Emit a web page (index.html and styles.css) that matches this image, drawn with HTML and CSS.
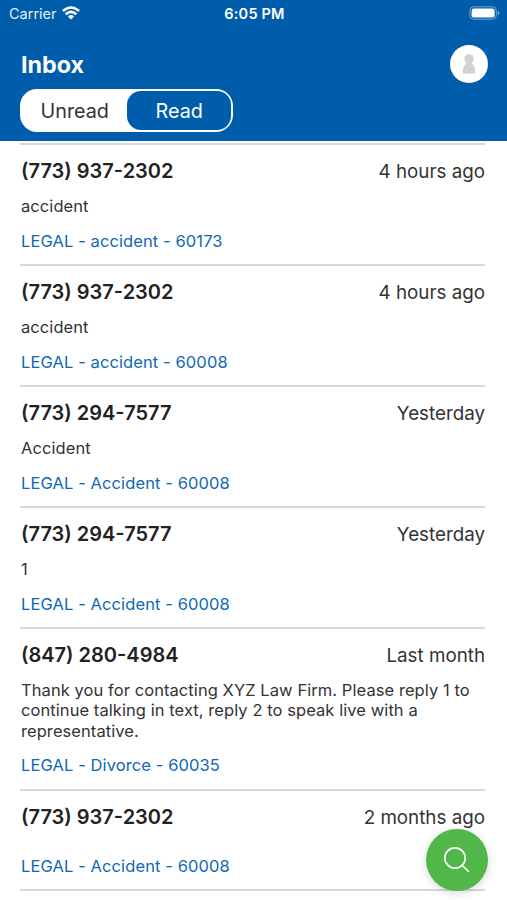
FILE: index.html
```html
<!DOCTYPE html>
<html lang="en">
<head>
    <meta charset="UTF-8">
    <meta name="viewport" content="width=device-width, initial-scale=1.0">
    <title>Inbox</title>
    <link rel="stylesheet" href="styles.css">
</head>
<body>
    <header class="header">
        <div class="status-bar">
            <div class="carrier">
                <span>Carrier</span>
                <svg class="wifi" width="18" height="14" viewBox="0 0 18 14" fill="none" stroke="#fff" stroke-width="2.5">
                    <path d="M0.9 5 Q9 -2 17.1 5"/>
                    <path d="M3.7 8.2 Q9 3.6 14.3 8.2"/>
                    <path d="M9 13.6 L5.9 10.4 Q9 7.8 12.1 10.4 Z" fill="#fff" stroke="none"/>
                </svg>
            </div>
            <span class="time">6:05 PM</span>
            <svg class="battery" width="31" height="14" viewBox="0 0 31 14">
                <rect x="0.9" y="0.8" width="26.4" height="12.4" rx="3.8" fill="none" stroke="#fff" stroke-opacity="0.45"/>
                <rect x="2.6" y="2.5" width="23" height="9" rx="2.2" fill="#fff"/>
                <path d="M28.6 4.8 Q30.4 5.5 30.4 7 Q30.4 8.5 28.6 9.2 Z" fill="#fff" fill-opacity="0.5"/>
            </svg>
        </div>
        <div class="title-bar">
            <h1>Inbox</h1>
            <button class="avatar" aria-label="Profile">
                <svg width="14" height="20" viewBox="0 0 14 20" fill="#cdd2d5">
                    <circle cx="7" cy="4.9" r="4.7"/>
                    <path d="M0.8 19.5 V16.2 Q1.4 11.2 4.6 9.6 V8 H9.4 V9.6 Q12.6 11.2 13.2 16.2 V19.5 Z"/>
                </svg>
            </button>
        </div>
        <div class="tabs">
            <button class="tab">Unread</button>
            <button class="tab active">Read</button>
        </div>
    </header>

    <main class="messages">
        <article class="message">
            <div class="message-top"><h2>(773) 937-2302</h2><span class="date">4 hours ago</span></div>
            <p class="text">accident</p>
            <a class="tag">LEGAL - accident - 60173</a>
        </article>
        <article class="message">
            <div class="message-top"><h2>(773) 937-2302</h2><span class="date">4 hours ago</span></div>
            <p class="text">accident</p>
            <a class="tag">LEGAL - accident - 60008</a>
        </article>
        <article class="message">
            <div class="message-top"><h2>(773) 294-7577</h2><span class="date">Yesterday</span></div>
            <p class="text">Accident</p>
            <a class="tag">LEGAL - Accident - 60008</a>
        </article>
        <article class="message">
            <div class="message-top"><h2>(773) 294-7577</h2><span class="date">Yesterday</span></div>
            <p class="text">1</p>
            <a class="tag">LEGAL - Accident - 60008</a>
        </article>
        <article class="message">
            <div class="message-top"><h2>(847) 280-4984</h2><span class="date">Last month</span></div>
            <p class="text">Thank you for contacting XYZ Law Firm. Please reply 1 to<br>continue talking in text, reply 2 to speak live with a<br>representative.</p>
            <a class="tag">LEGAL - Divorce - 60035</a>
        </article>
        <article class="message">
            <div class="message-top"><h2>(773) 937-2302</h2><span class="date">2 months ago</span></div>
            <p class="text"></p>
            <a class="tag">LEGAL - Accident - 60008</a>
        </article>
    </main>

    <button class="search" aria-label="Search">
        <svg width="28" height="28" viewBox="0 0 28 28" fill="none" stroke="#fff" stroke-width="1.7">
            <circle cx="12" cy="12" r="10.2"/>
            <path d="M19.3 19.3 L26 26"/>
        </svg>
    </button>
</body>
</html>
```

FILE: styles.css
```css
* {
    box-sizing: border-box;
}
body {
    margin: 0;
    height: 900px;
    overflow: hidden;
    background-color: #fff;
    color: #333;
    font-family: Inter, "Liberation Sans", sans-serif;
}
h1, h2, p {
    margin: 0;
}
button {
    border: none;
    padding: 0;
    font-family: inherit;
    cursor: pointer;
}
.header {
    height: 141px;
    background-color: #005dab;
    color: #fff;
}
.status-bar {
    display: grid;
    grid-template-columns: 1fr auto 1fr;
    align-items: center;
    height: 26px;
    padding: 0 7px 0 9px;
    font-size: 14.5px;
}
.carrier {
    display: flex;
    align-items: center;
    gap: 5px;
    color: #e0edf8;
}
.time {
    font-weight: 600;
    letter-spacing: 0.2px;
}
.battery {
    justify-self: end;
}
.title-bar {
    display: flex;
    justify-content: space-between;
    align-items: center;
    height: 38px;
    margin: 19px 19px 6px 21px;
}
.title-bar h1 {
    font-size: 23.3px;
    font-weight: 700;
}
.avatar {
    display: flex;
    align-items: center;
    justify-content: center;
    width: 38px;
    height: 38px;
    border-radius: 50%;
    background-color: #fff;
}
.tabs {
    display: flex;
    width: 213px;
    height: 43px;
    margin-left: 20px;
    padding: 2px;
    border-radius: 17px;
    background-color: #fff;
}
.tab {
    flex: 1;
    padding-left: 1px;
    border-radius: 14px;
    background: none;
    color: #333;
    font-size: 19.8px;
}
.tab.active {
    background-color: #005dab;
    color: #fff;
}
.messages {
    margin: 2px 22px 0 20px;
    border-bottom: 2px solid #d5d9dd;
}
.message {
    display: flex;
    flex-direction: column;
    padding: 14px 0 13.5px 1px;
    border-top: 2px solid #d5d9dd;
}
.message-top {
    display: flex;
    justify-content: space-between;
    line-height: 24px;
}
.message-top h2 {
    color: #222;
    font-size: 20px;
    font-weight: 600;
}
.date {
    font-size: 18.8px;
    line-height: 25px;
}
.text {
    margin: 12px 0 14.1px;
    font-size: 16.5px;
    letter-spacing: 0.07px;
    line-height: 20.4px;
}
.tag {
    color: #1068b5;
    font-size: 16.5px;
    letter-spacing: 0.1px;
    line-height: 20px;
}
.search {
    position: fixed;
    right: 19px;
    bottom: 9px;
    display: flex;
    align-items: center;
    justify-content: center;
    width: 62px;
    height: 62px;
    border-radius: 50%;
    background-color: #51b748;
    box-shadow: 0 2px 10px rgba(0, 0, 0, 0.16);
}
```
